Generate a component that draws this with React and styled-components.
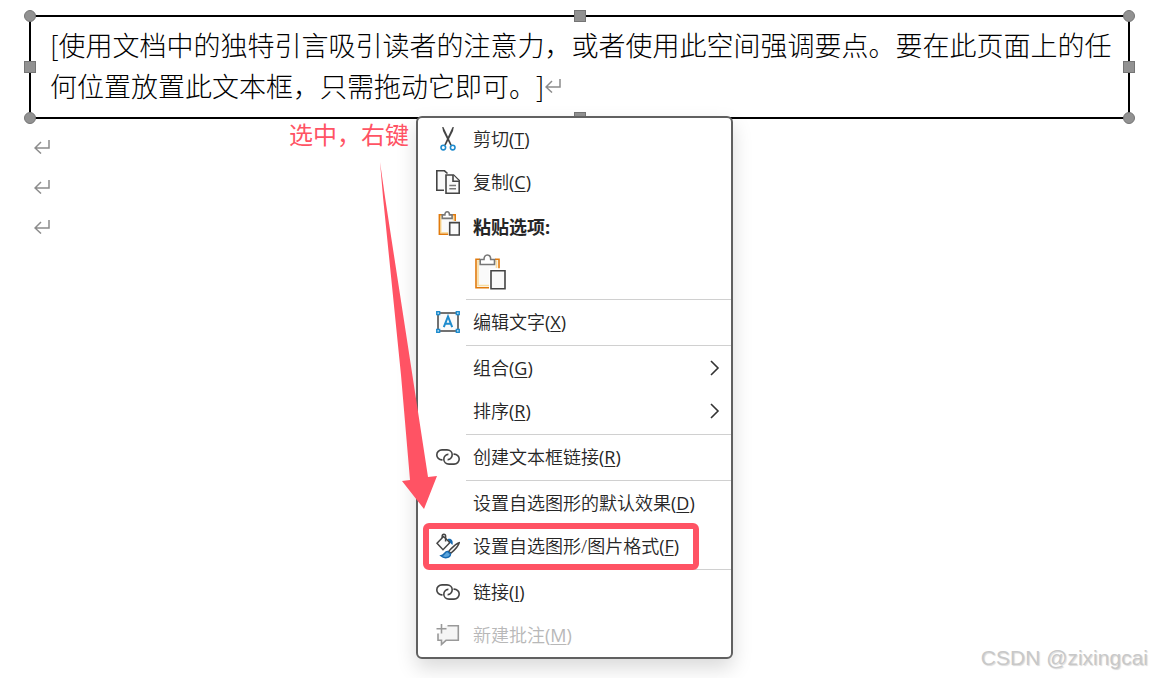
import React from "react";
import styled, { createGlobalStyle } from 'styled-components';

const quoteText = '[使用文档中的独特引言吸引读者的注意力\uFF0C或者使用此空间强调要点。要在此页面上的任何位置放置此文本框\uFF0C只需拖动它即可。]';
const noteText = '选中\uFF0C右键';

const menuItems = [
  { id: 'cut', label: '剪切', accessKey: 'T', icon: <CutIcon/> },
  { id: 'copy', label: '复制', accessKey: 'C', icon: <CopyIcon/> },
  { id: 'paste', type: 'paste', label: '粘贴选项:' },
  { id: 's1', type: 'separator' },
  { id: 'edit', label: '编辑文字', accessKey: 'X', icon: <TextBoxIcon/> },
  { id: 's2', type: 'separator' },
  { id: 'group', label: '组合', accessKey: 'G', submenu: true },
  { id: 'order', label: '排序', accessKey: 'R', submenu: true },
  { id: 's3', type: 'separator' },
  { id: 'boxlink', label: '创建文本框链接', accessKey: 'R', icon: <LinkIcon/> },
  { id: 's4', type: 'separator' },
  { id: 'default', label: '设置自选图形的默认效果', accessKey: 'D' },
  { id: 'format', label: '设置自选图形/图片格式', accessKey: 'F', icon: <FormatIcon/>, marked: true },
  { id: 's5', type: 'separator' },
  { id: 'link', label: '链接', accessKey: 'I', icon: <LinkIcon/> },
  { id: 'comment', label: '新建批注', accessKey: 'M', icon: <CommentIcon/>, disabled: true },
];

const handles = [
  ['0%', '0%', true], ['50%', '0%'], ['100%', '0%', true],
  ['0%', '50%'], ['100%', '50%'],
  ['0%', '100%', true], ['50%', '100%'], ['100%', '100%', true],
];

export default function App() {
  return (
    <Page lang="zh-CN">
      <GlobalStyle/>
      <TextFrame>
        <Quote>{quoteText}<ReturnMark/></Quote>
        <Handles>
          {handles.map(([x, y, round]) => (
            <Handle key={x + y} $x={x} $y={y} $round={round}/>
          ))}
        </Handles>
      </TextFrame>
      <Paragraphs>
        <Paragraph><ReturnMark/></Paragraph>
        <Paragraph><ReturnMark/></Paragraph>
        <Paragraph><ReturnMark/></Paragraph>
      </Paragraphs>
      <Watermark>CSDN @zixingcai</Watermark>
      <ContextMenu/>
      <Note>{noteText}</Note>
      <Arrow width="36" height="348" viewBox="0 0 36 348" aria-hidden="true">
        <path d="M-22 0L-17 35L5 178L26 315L35 314L22 347L0 319L8 318L-1 213L-19 35Z"/>
      </Arrow>
    </Page>
  )
}

function ContextMenu() {
  return (
    <Menu role="menu">
      {menuItems.map((item) => {
        if (item.type === 'separator')
          return <Separator key={item.id} role="separator"/>;

        if (item.type === 'paste')
          return (
            <PasteGroup key={item.id} role="group" aria-labelledby="paste-title">
              <PasteHeader>
                <IconCell><PasteIcon width={22} height={25}/></IconCell>
                <PasteTitle id="paste-title">{item.label}</PasteTitle>
              </PasteHeader>
              <PasteButton type="button" role="menuitem" aria-label="粘贴">
                <PasteIcon width={32} height={36}/>
              </PasteButton>
            </PasteGroup>
          );

        return (
          <Item key={item.id} role="none" $marked={item.marked}>
            <ItemButton
              type="button"
              role="menuitem"
              disabled={item.disabled}
              aria-haspopup={item.submenu ? 'menu' : undefined}
            >
              <IconCell>{item.icon}</IconCell>
              <Label>{item.label}<AccessKey>(<u>{item.accessKey}</u>)</AccessKey></Label>
              {item.submenu && <Chevron/>}
            </ItemButton>
          </Item>
        );
      })}
    </Menu>
  )
}

function ReturnMark() {
  return (
    <ReturnSvg width="16" height="14" viewBox="0 0 16 14" aria-hidden="true">
      <path d="M15 0V8H1M7 2L1 8L7 13.5"/>
    </ReturnSvg>
  )
}

function Chevron() {
  return (
    <svg width="10" height="16" viewBox="0 0 10 16" fill="none" stroke="#333" strokeWidth="1.6" aria-hidden="true">
      <path d="M1 1L8 8L1 15"/>
    </svg>
  )
}

function CutIcon() {
  return (
    <svg width="24" height="24" viewBox="0 0 24 24" fill="none" aria-hidden="true">
      <path d="M6.2 0L7.4 0L12.6 11L15.8 18L14.3 18.4L7 4Z" fill="#444"/>
      <path d="M17.8 0L16.6 0L11.4 11L8.2 18L9.7 18.4L17 4Z" fill="#444"/>
      <circle cx="7.3" cy="20.6" r="2.3" stroke="#1e8bcd" strokeWidth="1.6"/>
      <circle cx="16.7" cy="20.6" r="2.3" stroke="#1e8bcd" strokeWidth="1.6"/>
    </svg>
  )
}

function CopyIcon() {
  return (
    <svg width="24" height="24" viewBox="0 0 24 24" fill="#fafafa" stroke="#444" strokeWidth="1.6" aria-hidden="true">
      <path d="M8 20.2H.8V.8H8.5L11.5 3.5"/>
      <path d="M10 5H17.5L23.2 10.7V23.2H10Z"/>
      <path d="M17 5V11.2H23.2"/>
      <path d="M13.3 15.5H20M13.3 18.8H20" stroke="#777"/>
    </svg>
  )
}

function PasteIcon({ width, height }) {
  return (
    <ScaledSvg width={width} height={height} viewBox="0 0 32 36" aria-hidden="true">
      <path d="M2 5.5H25V33.5H2Z" fill="#fafafa" stroke="none"/>
      <path d="M7 7H4V31.5H15M20 7H22.5V14" stroke="#f9dda0"/>
      <path d="M6 5.3H2V33.7H15.5M21 5.3H25V14.5" stroke="#e17a0c"/>
      <path d="M6.2 10.5V5.5H10C10 2.7 11.3 1 13.3 1S16.7 2.7 16.7 5.5H20.5V10.5Z" fill="#fff" stroke="#777"/>
      <path d="M15 14.5H32V36H15Z" fill="#fff" stroke="none"/>
      <path d="M17 16.7H31V34.8H17Z" fill="#fafafa" stroke="#444"/>
    </ScaledSvg>
  )
}

function TextBoxIcon() {
  return (
    <svg width="24" height="22" viewBox="0 0 24 22" fill="none" strokeWidth="1.5" aria-hidden="true">
      <path d="M2 2H22V20H2Z" fill="#fafafa" stroke="#444"/>
      <path d="M.8.8h2.8v2.8H.8zM20.4.8h2.8v2.8h-2.8zM.8 18.4h2.8v2.8H.8zM20.4 18.4h2.8v2.8h-2.8z" fill="#fff" stroke="#1e8bcd"/>
      <path d="M7.8 16.2L12 5.5L16.2 16.2M9.2 12.7H14.8" stroke="#1e8bcd" strokeWidth="2"/>
    </svg>
  )
}

function LinkIcon() {
  const loop = 'M6.5 10.9H6C3 10.9.8 8.6.8 5.9S3 .9 6 .9H11C14 .9 16.2 3.1 16.2 5.8S14 10.8 11.6 10.6';
  return (
    <svg width="24" height="16" viewBox="0 0 24 16" fill="none" stroke="#444" strokeWidth="1.6" aria-hidden="true">
      <path d={loop}/>
      <path d={loop} transform="rotate(180 12 8)"/>
    </svg>
  )
}

function FormatIcon() {
  return (
    <svg width="24" height="26" viewBox="0 0 24 26" fill="none" strokeWidth="1.5" aria-hidden="true">
      <path d="M11.5 6.2C14.5 4.6 17.8 7 16.4 12L12.8 8.6Z" fill="#1769b0"/>
      <path d="M7.5 3.5L1 10.3L7 16.7L13.3 10.2V9L7.5 3.5Z" fill="#fafafa" stroke="#444"/>
      <path d="M6.2 5V3C6.2.5 9.6.5 9.6 3V8.5" stroke="#444"/>
      <path d="M23.2 9.7C21 10 14.8 15.5 12.7 18.4L14.8 20.2C18 17.5 22.5 12.5 23.2 9.7Z" fill="#fafafa" stroke="#444"/>
      <path d="M11.6 18.5C8.6 18.2 9 22.5 5 22.8C8 25.8 14.5 25.2 14.5 20.8Z" fill="#5aa5dd" stroke="#1769b0"/>
    </svg>
  )
}

function CommentIcon() {
  return (
    <svg width="24" height="24" viewBox="0 0 24 24" fill="none" stroke="#999" strokeWidth="1.6" aria-hidden="true">
      <path d="M10 2.7H22.3V17.3H10L5.5 21.5V17.3H2V10H6.5V5Z" fill="#f5f5f5" stroke="none"/>
      <path d="M11.5 2.7H22.3V17.3H10L5.5 21.5V17.3H2V10.5M5.5 1V10.5M.5 5.7H10.5"/>
    </svg>
  )
}

const GlobalStyle = createGlobalStyle`
  * {
    box-sizing: border-box;
  }
  body {
    margin: 0;
    background-color: #fff;
    font-family: "Open Sans", "Noto Sans CJK SC", sans-serif;
    text-spacing-trim: space-all;
  }
`;

const Page = styled.main`
  position: relative;
  display: flex;
  flex-direction: column;
  min-height: 100vh;
  padding: 15px 22px 8px 29px;
  overflow: hidden;
`;

const TextFrame = styled.section`
  position: relative;
  border: 2px solid #000;
  padding: 7px 10px 11px 19px;
`;
const Quote = styled.p`
  margin: 0;
  font-family: "Noto Sans CJK SC", sans-serif;
  font-size: 27px;
  font-weight: 300;
  line-height: 41px;
  color: #000;
`;
const Handles = styled.div`
  position: absolute;
  inset: -1px;
`;
const Handle = styled.span`
  position: absolute;
  left: ${props => props.$x};
  top: ${props => props.$y};
  width: 12px;
  height: 12px;
  transform: translate(-50%, -50%);
  border: 1px solid #757575;
  border-radius: ${props => props.$round ? '50%' : '0'};
  background-color: #929292;
`;

const Paragraphs = styled.div`
  padding: 8px 5px;
`;
const Paragraph = styled.p`
  display: flex;
  align-items: center;
  height: 40px;
  margin: 0;
`;
const ReturnSvg = styled.svg`
  fill: none;
  stroke: #8c8c8c;
  stroke-width: 1.5;
  vertical-align: 4px;
`;
const ScaledSvg = styled.svg`
  fill: none;
  stroke-width: 1.6;

  path {
    vector-effect: non-scaling-stroke;
  }
`;

const Menu = styled.ul`
  position: absolute;
  left: 416px;
  top: 116px;
  width: 317px;
  margin: 0;
  padding: 0;
  list-style: none;
  border: 2px solid #606060;
  border-radius: 6px;
  background-color: #fff;
  box-shadow: 0 9px 20px rgba(0, 0, 0, 15%);
`;
const Item = styled.li`
  position: relative;

  &::after {
    content: ${props => props.$marked ? '""' : 'none'};
    position: absolute;
    z-index: 1;
    top: -2px;
    right: 32px;
    bottom: -2px;
    left: 5px;
    border: 6px solid #ff5364;
    border-radius: 6px;
    pointer-events: none;
  }
`;
const ItemButton = styled.button`
  display: flex;
  align-items: center;
  width: 100%;
  height: 43px;
  padding: 0 11px 1px 0;
  border: none;
  background: none;
  font-family: inherit;
  font-size: 18px;
  font-weight: 350;
  text-align: left;
  color: #262626;
  cursor: pointer;

  &:disabled {
    color: #b8b8b8;
    cursor: default;
  }
`;
const IconCell = styled.span`
  display: flex;
  flex: none;
  justify-content: flex-end;
  width: 48px;
  padding-right: 6px;
`;
const Label = styled.span`
  flex: 1;
  padding: 0 0 1px 7px;
  line-height: 24px;
  white-space: nowrap;
`;
const AccessKey = styled.span`
  font-weight: 400;

  u {
    text-underline-offset: 2px;
    text-decoration-thickness: 1px;
  }
`;
const Separator = styled.li`
  height: 1px;
  margin: 1px 0 1px 48px;
  background-color: #d0d0d0;
`;

const PasteGroup = styled.li`
  padding-bottom: 4px;
`;
const PasteHeader = styled.div`
  display: flex;
  align-items: center;
  height: 38px;
`;
const PasteTitle = styled.span`
  padding: 8px 0 0 7px;
  font-size: 18px;
  font-weight: 700;
  line-height: 24px;
  color: #262626;
`;
const PasteButton = styled.button`
  display: block;
  margin: 8px 0 0 52px;
  padding: 4px;
  border: none;
  background: none;
  cursor: pointer;

  svg {
    display: block;
  }
`;

const Note = styled.div`
  position: absolute;
  left: 289px;
  top: 117px;
  font-size: 24px;
  line-height: 36px;
  color: #ff5364;
`;
const Arrow = styled.svg`
  position: absolute;
  left: 402px;
  top: 162px;
  overflow: visible;
  fill: #ff5364;
`;
const Watermark = styled.footer`
  align-self: flex-end;
  margin: auto -18px 0 0;
  font-family: "Liberation Sans", sans-serif;
  font-size: 21px;
  line-height: 24px;
  color: #c8c8c8;
  text-shadow: 1px 1px 1px rgba(0, 0, 0, 15%);
`;
